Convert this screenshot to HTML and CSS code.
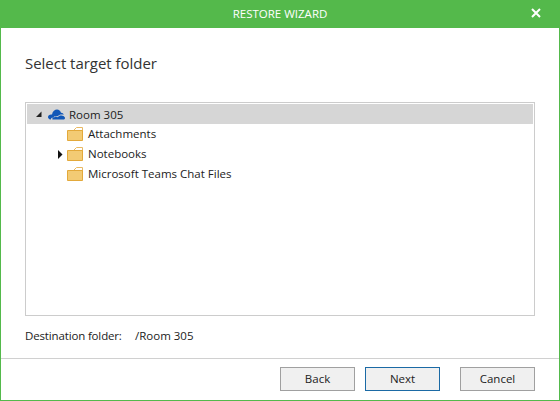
FILE: index.html
```html
<!DOCTYPE html>
<html>
	<head>
		<meta charset="utf-8" />
		<title>Restore wizard</title>
		<link rel="stylesheet" href="styles.css">
	</head>
	<body>
		<div class="window">
			<div class="titlebar">
				<span class="title">RESTORE WIZARD</span>
				<svg class="close" width="10" height="10" viewBox="0 0 10 10"><path d="M1 1L9 9M9 1L1 9" stroke="#fff" stroke-width="2" fill="none"/></svg>
			</div>
			<div class="main">
				<h1 class="heading">Select target folder</h1>
				<div class="tree">
					<div class="row selected">
						<span class="arrow"><svg width="8" height="8" viewBox="0 0 8 8"><path d="M6.500 1.500V7H1Z" fill="#222"/></svg></span>
						<svg class="cloud" width="17" height="11" viewBox="0 0 17 11"><path d="M4 5.500C4.500 2 7 .5 9 .5C11 .5 12.500 2 13 3.800C15 4 15.500 5 15.800 5.800C13.500 5 11 5.500 9.800 7.300C8 6.500 5.500 7 5.200 9C4 8.500 3 9 2.800 10.500H2C.5 10 0 8.800 0 8C0 6.300 2 5 4 5.500Z" fill="#1258b8"/><path d="M4.500 10.500C3.800 9.800 4.800 8 6.500 8.200C7 7.200 8.500 7 9.800 8.300C11 6.300 13 6 14.500 6.800C16 7.200 17 8 17 9C17 10 16 10.500 15.500 10.500Z" fill="#1258b8"/></svg>
						<span class="label">Room 305</span>
					</div>
					<div class="row child">
						<span class="arrow"></span>
						<svg class="folder" width="16" height="14" viewBox="0 0 16 14"><path d="M6.500 3.500L9.500 .5H15.500V4H6.500Z" fill="#fff" stroke="#e8b964"/><path d="M.5 3.500H15.500V13.500H.5Z" fill="#f3cb74" stroke="#e3a93b"/></svg>
						<span class="label">Attachments</span>
					</div>
					<div class="row child">
						<span class="arrow"><svg width="6" height="9" viewBox="0 0 6 9"><path d="M1 0L5.500 4.500L1 9Z" fill="#111"/></svg></span>
						<svg class="folder" width="16" height="14" viewBox="0 0 16 14"><path d="M6.500 3.500L9.500 .5H15.500V4H6.500Z" fill="#fff" stroke="#e8b964"/><path d="M.5 3.500H15.500V13.500H.5Z" fill="#f3cb74" stroke="#e3a93b"/></svg>
						<span class="label">Notebooks</span>
					</div>
					<div class="row child">
						<span class="arrow"></span>
						<svg class="folder" width="16" height="14" viewBox="0 0 16 14"><path d="M6.500 3.500L9.500 .5H15.500V4H6.500Z" fill="#fff" stroke="#e8b964"/><path d="M.5 3.500H15.500V13.500H.5Z" fill="#f3cb74" stroke="#e3a93b"/></svg>
						<span class="label">Microsoft Teams Chat Files</span>
					</div>
				</div>
				<div class="destination">
					<span class="dest-label">Destination folder:</span>
					<span>/Room 305</span>
				</div>
			</div>
			<div class="footer">
				<button class="btn">Back</button>
				<button class="btn primary">Next</button>
				<button class="btn cancel">Cancel</button>
			</div>
		</div>
	</body>
</html>
```

FILE: styles.css
```css
*{
	margin: 0;
	padding: 0;
	box-sizing: border-box;
}
html,body{
	width: 560px;
	height: 401px;
	overflow: hidden;
	background: #fff;
}
body{
	font-family: "Open Sans", "Noto Sans", sans-serif;
	font-size: 11.5px;
	color: #222;
}
.window{
	width: 560px;
	height: 401px;
	display: flex;
	flex-direction: column;
	border: 1px solid #54b94b;
	border-top: 0;
}
.titlebar{
	height: 28px;
	margin: 0 -1px;
	padding-bottom: 2px;
	background: #54b94b;
	color: #fff;
	display: flex;
	align-items: center;
	justify-content: center;
	position: relative;
}
.title{
	font-size: 11.5px;
}
.close{
	position: absolute;
	right: 19px;
	top: 8px;
}
.main{
	flex: 1;
	padding: 0 24px;
	display: flex;
	flex-direction: column;
}
.heading{
	font-size: 15px;
	font-weight: normal;
	color: #333;
	line-height: 20px;
	margin-top: 25px;
	letter-spacing: -.03px;
}
.tree{
	height: 214px;
	margin-top: 29px;
	border: 1px solid #ccc;
	padding: 1px;
}
.row{
	height: 20px;
	display: flex;
	align-items: center;
}
.row.selected{
	background: #d6d6d6;
}
.arrow{
	width: 8px;
	height: 9px;
	display: flex;
	margin-left: 8px;
	margin-right: 4px;
	flex: none;
}
.child .arrow{
	margin-left: 30px;
	margin-right: 2px;
}
.child .label{
	margin-bottom: 2px;
}
.cloud{
	margin-left: 1px;
	margin-right: 4px;
}
.folder{
	margin-right: 5px;
}
.destination{
	margin-top: 12px;
	line-height: 16px;
	display: flex;
}
.dest-label{
	width: 110px;
	letter-spacing: -.15px;
}
.footer{
	height: 42px;
	border-top: 1px solid #d0d0d0;
	padding: 8px 24px 0 0;
	display: flex;
	justify-content: flex-end;
	gap: 10px;
}
.btn{
	width: 75px;
	height: 24px;
	padding-bottom: 2px;
	background: #f0f0f0;
	border: 1px solid #a0a0a0;
	border-radius: 0;
	font: inherit;
	color: #222;
}
.btn.primary{
	border-color: #1b6aa5;
}
.btn.cancel{
	margin-left: 10px;
}
```
